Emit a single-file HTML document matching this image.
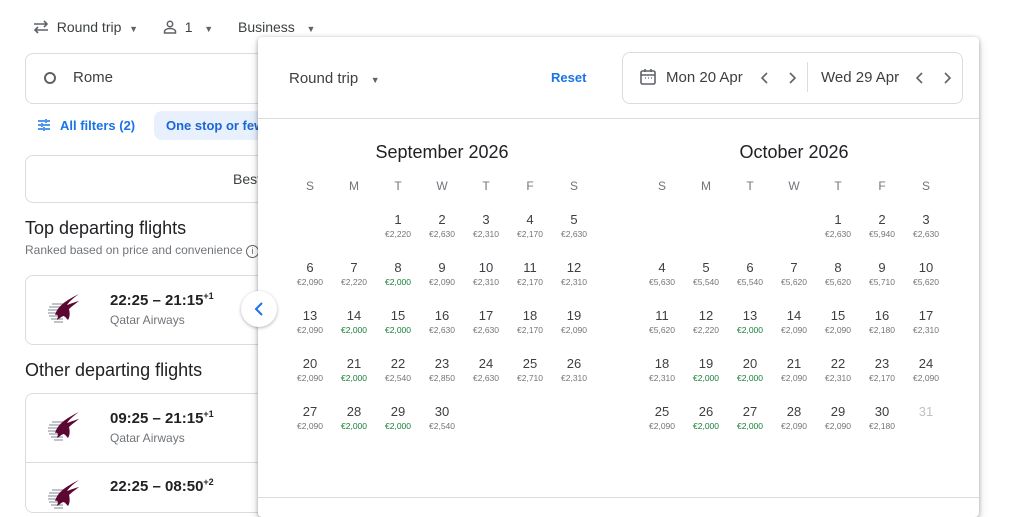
<!DOCTYPE html>
<html><head><meta charset="utf-8"><style>
*{margin:0;padding:0;box-sizing:border-box}
body{width:1024px;height:501px;overflow:hidden;background:#fff;font-family:"Liberation Sans",sans-serif;color:#3c4043;position:relative}
.a{position:absolute}
.top{top:19px;font-size:14px;color:#3c4043}
.box{border:1px solid #dadce0;border-radius:8px}
.card{left:25px;width:300px;border:1px solid #dadce0;border-radius:8px}
.t{font-size:15px;color:#202124;font-weight:bold}
.t sup{font-size:9px}
.al{font-size:12px;color:#70757a}
.panel{left:258px;top:37px;width:721px;height:480px;background:#fff;box-shadow:0 1px 4px rgba(0,0,0,.3),0 4px 10px rgba(0,0,0,.15);border-radius:4px}
.mt{font-size:18px;color:#202124;width:308px;text-align:center}
.wd{display:grid;grid-template-columns:repeat(7,44px);font-size:12px;color:#70757a;text-align:center}
.g{display:grid;grid-template-columns:repeat(7,44px);grid-auto-rows:48px;text-align:center;top:212px}
.g div{font-size:13px;color:#3c4043;line-height:16px}
.g div b{display:block;font-weight:normal;font-size:8.5px;color:#70757a;line-height:12px;margin-top:0}
.g div b.gr{color:#188038}
.logo{left:44px}
</style></head><body>
<div class="a top" style="left:33px">
<svg width="16" height="14" viewBox="0 0 16 14" style="vertical-align:-2px"><path d="M1 4h13M11 1l3 3-3 3M15 10H2M5 7l-3 3 3 3" fill="none" stroke="#5f6368" stroke-width="1.6"/></svg>&nbsp; Round trip &nbsp;<span style="font-size:9px;color:#5f6368">▼</span></div>
<div class="a top" style="left:163px"><svg width="14" height="14" viewBox="0 0 14 14" style="vertical-align:-2px"><circle cx="7" cy="4" r="2.7" fill="none" stroke="#5f6368" stroke-width="1.5"/><path d="M1.5 13v-1.5c0-2 3-3 5.5-3s5.5 1 5.5 3V13z" fill="none" stroke="#5f6368" stroke-width="1.5"/></svg>&nbsp; 1 &nbsp;&nbsp;<span style="font-size:9px;color:#5f6368">▼</span></div>
<div class="a top" style="left:238px">Business &nbsp;&nbsp;<span style="font-size:9px;color:#5f6368">▼</span></div>
<div class="a box" style="left:25px;top:53px;width:300px;height:51px"></div>
<div class="a" style="left:44px;top:72px;width:12px;height:12px;border:2.5px solid #5f6368;border-radius:50%"></div>
<div class="a" style="left:73px;top:69px;font-size:15px;color:#3c4043">Rome</div>
<svg class="a" style="left:37px;top:118px" width="14" height="14" viewBox="0 0 14 14"><path d="M1 3h7M10 3h3M1 7h3M6 7h7M1 11h5M8 11h5M9 1v4M5 5v4M7 9v4" stroke="#1a73e8" stroke-width="1.5" fill="none"/></svg>
<div class="a" style="left:60px;top:118px;font-size:13px;color:#1a73e8;font-weight:bold">All filters (2)</div>
<div class="a" style="left:154px;top:111px;width:120px;height:29px;background:#e8f0fe;border-radius:8px"></div>
<div class="a" style="left:166px;top:118px;font-size:13px;color:#1967d2;font-weight:bold">One stop or fewer</div>
<div class="a box" style="left:25px;top:155px;width:300px;height:48px"></div>
<div class="a" style="left:233px;top:171px;font-size:14px">Best</div>
<div class="a" style="left:25px;top:218px;font-size:18px;color:#202124">Top departing flights</div>
<div class="a" style="left:25px;top:243px;font-size:12px;color:#70757a">Ranked based on price and convenience <span style="display:inline-block;width:13px;height:13px;border:1.3px solid #5f6368;border-radius:50%;font-size:9px;text-align:center;line-height:11px;color:#5f6368">i</span></div>
<div class="a card" style="top:275px;height:70px"></div>
<div class="a" style="left:25px;top:360px;font-size:18px;color:#202124">Other departing flights</div>
<div class="a card" style="top:393px;height:120px"></div>
<div class="a" style="left:26px;top:462px;width:298px;height:1px;background:#dadce0"></div>
<svg class="a logo" style="top:291px" width="40" height="36" viewBox="0 0 40 36"><g stroke="#9aa0a6" stroke-width="1.2"><path d="M8 13h12M5 16h14M4 19h14M4 22h14M5 25h14M7 28h12M10 31h9"/></g><path d="M11 24c3-9 10-14 24-21-7 5-10 8-12 11 3-1 8-3 12-4-4 3-8 6-10 8 1 4 1 8-1 11-2-2-3-4-5-4-2 1-4 3-6 4 1-3 2-6-2-5z" fill="#5c0632"/></svg>
<svg class="a logo" style="top:409px" width="40" height="36" viewBox="0 0 40 36"><g stroke="#9aa0a6" stroke-width="1.2"><path d="M8 13h12M5 16h14M4 19h14M4 22h14M5 25h14M7 28h12M10 31h9"/></g><path d="M11 24c3-9 10-14 24-21-7 5-10 8-12 11 3-1 8-3 12-4-4 3-8 6-10 8 1 4 1 8-1 11-2-2-3-4-5-4-2 1-4 3-6 4 1-3 2-6-2-5z" fill="#5c0632"/></svg>
<svg class="a logo" style="top:477px" width="40" height="36" viewBox="0 0 40 36"><g stroke="#9aa0a6" stroke-width="1.2"><path d="M8 13h12M5 16h14M4 19h14M4 22h14M5 25h14M7 28h12M10 31h9"/></g><path d="M11 24c3-9 10-14 24-21-7 5-10 8-12 11 3-1 8-3 12-4-4 3-8 6-10 8 1 4 1 8-1 11-2-2-3-4-5-4-2 1-4 3-6 4 1-3 2-6-2-5z" fill="#5c0632"/></svg>
<div class="a t" style="left:110px;top:291px">22:25 – 21:15<sup>+1</sup></div>
<div class="a al" style="left:110px;top:313px">Qatar Airways</div>
<div class="a t" style="left:110px;top:409px">09:25 – 21:15<sup>+1</sup></div>
<div class="a al" style="left:110px;top:431px">Qatar Airways</div>
<div class="a t" style="left:110px;top:477px">22:25 – 08:50<sup>+2</sup></div>

<div class="a panel">
<div class="a" style="left:31px;top:33px;font-size:15px">Round trip &nbsp;&nbsp;<span style="font-size:9px;color:#5f6368">▼</span></div>
<div class="a" style="left:293px;top:33px;font-size:13px;color:#1a73e8;font-weight:bold">Reset</div>
<div class="a box" style="left:364px;top:15px;width:341px;height:52px"></div>
<svg class="a" style="left:381px;top:31px" width="18" height="18" viewBox="0 0 18 18"><rect x="2" y="3" width="14" height="13" rx="1.5" fill="none" stroke="#5f6368" stroke-width="1.6"/><path d="M2 7h14M6 1v3M12 1v3" stroke="#5f6368" stroke-width="1.6"/><path d="M6 10h1M9 10h1M12 10h1" stroke="#5f6368" stroke-width="1.3"/></svg>
<div class="a" style="left:408px;top:32px;font-size:15px">Mon 20 Apr</div>
<svg class="a" style="left:502px;top:35px" width="10" height="12" viewBox="0 0 10 12"><path d="M7 1L2 6l5 5" fill="none" stroke="#5f6368" stroke-width="1.6"/></svg>
<svg class="a" style="left:529px;top:35px" width="10" height="12" viewBox="0 0 10 12"><path d="M3 1l5 5-5 5" fill="none" stroke="#5f6368" stroke-width="1.6"/></svg>
<div class="a" style="left:549px;top:25px;width:1px;height:30px;background:#dadce0"></div>
<div class="a" style="left:563px;top:32px;font-size:15px">Wed 29 Apr</div>
<svg class="a" style="left:657px;top:35px" width="10" height="12" viewBox="0 0 10 12"><path d="M7 1L2 6l5 5" fill="none" stroke="#5f6368" stroke-width="1.6"/></svg>
<svg class="a" style="left:684px;top:35px" width="10" height="12" viewBox="0 0 10 12"><path d="M3 1l5 5-5 5" fill="none" stroke="#5f6368" stroke-width="1.6"/></svg>
<div class="a" style="left:0;top:81px;width:721px;height:1px;background:#dadce0"></div>
<div class="a" style="left:0;top:460px;width:721px;height:1px;background:#dadce0"></div>
</div>
<div class="a" style="left:241px;top:291px;width:36px;height:36px;border-radius:50%;background:#fff;box-shadow:0 1px 3px rgba(0,0,0,.3)"></div>
<svg class="a" style="left:252px;top:301px" width="14" height="16" viewBox="0 0 14 16"><path d="M10 2L4 8l6 6" fill="none" stroke="#1a73e8" stroke-width="2"/></svg>

<div class="a mt" style="left:288px;top:142px">September 2026</div>
<div class="a mt" style="left:640px;top:142px">October 2026</div>
<div class="a wd" style="left:288px;top:179px"><div>S</div><div>M</div><div>T</div><div>W</div><div>T</div><div>F</div><div>S</div></div>
<div class="a wd" style="left:640px;top:179px"><div>S</div><div>M</div><div>T</div><div>W</div><div>T</div><div>F</div><div>S</div></div>

<div class="a g" style="left:288px">
<div></div><div></div>
<div>1<b>€2,220</b></div><div>2<b>€2,630</b></div><div>3<b>€2,310</b></div><div>4<b>€2,170</b></div><div>5<b>€2,630</b></div>
<div>6<b>€2,090</b></div><div>7<b>€2,220</b></div><div>8<b class="gr">€2,000</b></div><div>9<b>€2,090</b></div><div>10<b>€2,310</b></div><div>11<b>€2,170</b></div><div>12<b>€2,310</b></div>
<div>13<b>€2,090</b></div><div>14<b class="gr">€2,000</b></div><div>15<b class="gr">€2,000</b></div><div>16<b>€2,630</b></div><div>17<b>€2,630</b></div><div>18<b>€2,170</b></div><div>19<b>€2,090</b></div>
<div>20<b>€2,090</b></div><div>21<b class="gr">€2,000</b></div><div>22<b>€2,540</b></div><div>23<b>€2,850</b></div><div>24<b>€2,630</b></div><div>25<b>€2,710</b></div><div>26<b>€2,310</b></div>
<div>27<b>€2,090</b></div><div>28<b class="gr">€2,000</b></div><div>29<b class="gr">€2,000</b></div><div>30<b>€2,540</b></div>
</div>
<div class="a g" style="left:640px">
<div></div><div></div><div></div><div></div>
<div>1<b>€2,630</b></div><div>2<b>€5,940</b></div><div>3<b>€2,630</b></div>
<div>4<b>€5,630</b></div><div>5<b>€5,540</b></div><div>6<b>€5,540</b></div><div>7<b>€5,620</b></div><div>8<b>€5,620</b></div><div>9<b>€5,710</b></div><div>10<b>€5,620</b></div>
<div>11<b>€5,620</b></div><div>12<b>€2,220</b></div><div>13<b class="gr">€2,000</b></div><div>14<b>€2,090</b></div><div>15<b>€2,090</b></div><div>16<b>€2,180</b></div><div>17<b>€2,310</b></div>
<div>18<b>€2,310</b></div><div>19<b class="gr">€2,000</b></div><div>20<b class="gr">€2,000</b></div><div>21<b>€2,090</b></div><div>22<b>€2,310</b></div><div>23<b>€2,170</b></div><div>24<b>€2,090</b></div>
<div>25<b>€2,090</b></div><div>26<b class="gr">€2,000</b></div><div>27<b class="gr">€2,000</b></div><div>28<b>€2,090</b></div><div>29<b>€2,090</b></div><div>30<b>€2,180</b></div><div style="color:#bdc1c6">31</div>
</div>
</body></html>
